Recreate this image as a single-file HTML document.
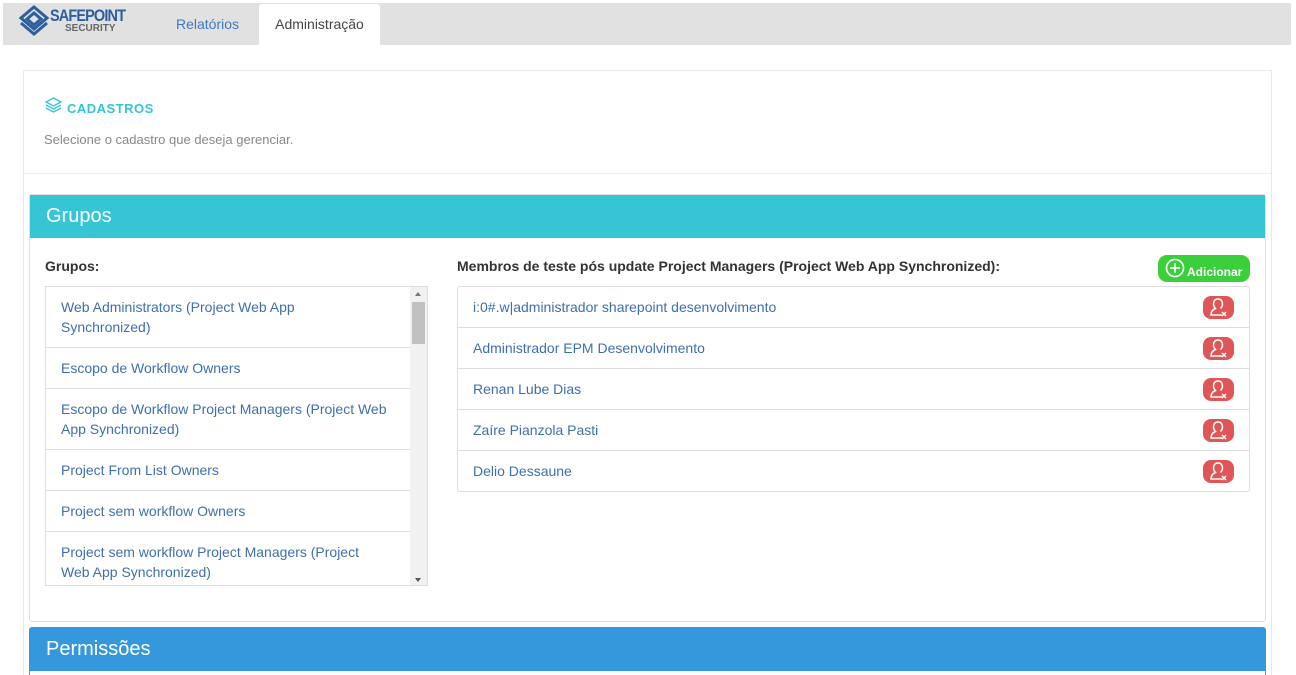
<!DOCTYPE html>
<html><head><meta charset="utf-8"><style>
*{box-sizing:border-box;margin:0;padding:0}
html,body{width:1296px;height:675px;overflow:hidden}
body{background:#fff;font-family:"Liberation Sans",Arial,sans-serif;font-size:14px;color:#333;position:relative}
.top{position:absolute;left:3px;top:3px;width:1288px;height:42px;background:#e1e1e1}
.tab1{position:absolute;left:176px;top:16px;color:#3f7bb8;font-size:14px}
.tab2{position:absolute;left:259px;top:4px;width:121px;height:41px;background:#fff;border-radius:3px 3px 0 0;text-align:center;line-height:41px;color:#444}
.card{position:absolute;left:23px;top:70px;width:1249px;height:620px;border:1px solid #e8e8e8}
.hdr{position:absolute;left:0;top:0;width:100%;height:103px;border-bottom:1px solid #eee}
.pan{position:absolute;left:29px;width:1237px;border:1px solid #ddd;border-radius:3px}
.ph{height:43px;color:#fff;font-size:20px;line-height:43px;padding-left:16px}
.list{position:absolute;border:1px solid #ddd}
.it{border-bottom:1px solid #ddd;color:#3f6fae;padding:10px 15px;line-height:20px;font-size:14px;white-space:nowrap}
.rm{position:absolute;right:15px;top:9px;width:31px;height:23px;background:#e05656;border-radius:8px}
</style></head><body>
<div class="top">
<svg style="position:absolute;left:15px;top:1px" width="32" height="32" viewBox="0 0 32 32"><g fill="none" stroke="#2c5f9e" stroke-width="3"><path d="M16 3L29 14L16 25L3 14Z"/><path d="M16 9L23 15L16 21L9 15Z"/><path d="M3 19L16 30L29 19"/></g></svg>
<div style="position:absolute;left:47px;top:3px;font-weight:bold;color:#2c5f9e;font-size:17px;letter-spacing:-1px;transform:scaleX(.85);transform-origin:left">SAFEPOINT</div>
<div style="position:absolute;left:62px;top:20px;font-weight:bold;color:#666;font-size:10px">SECURITY</div>
</div>
<div class="tab1">Relatórios</div>
<div class="tab2">Administração</div>
<div class="card"><div class="hdr">
<svg style="position:absolute;left:21px;top:26px" width="17" height="16" viewBox="0 0 17 16"><g fill="none" stroke="#35c5d5" stroke-width="1.3"><path d="M8.5 1L16 5L8.5 9L1 5Z"/><path d="M1 8L8.5 12L16 8"/><path d="M1 11L8.5 15L16 11"/></g></svg>
<div style="position:absolute;left:43px;top:30px;color:#35c5d5;font-weight:bold;font-size:13px;letter-spacing:.5px">CADASTROS</div>
<div style="position:absolute;left:20px;top:61px;color:#888;font-size:13px">Selecione o cadastro que deseja gerenciar.</div>
</div></div>
<div class="pan" style="top:194px;height:428px;background:#fff">
<div class="ph" style="background:#35c5d5">Grupos</div>
<div style="position:absolute;left:15px;top:63px;font-weight:bold;font-size:14px">Grupos:</div>
<div style="position:absolute;left:427px;top:63px;font-weight:bold;font-size:14px">Membros de teste pós update Project Managers (Project Web App Synchronized):</div>
<div style="position:absolute;left:1128px;top:60px;width:92px;height:27px;background:#3ccf3c;border-radius:9px;color:#fff;font-weight:bold;font-size:12px">
<svg style="position:absolute;left:7px;top:3px" width="20" height="20" viewBox="0 0 20 20"><circle cx="10" cy="10" r="8.5" fill="none" stroke="#fff" stroke-width="1.6"/><path d="M10 5V15M5 10H15" stroke="#fff" stroke-width="1.6"/></svg>
<span style="position:absolute;left:29px;top:10px">Adicionar</span></div>
<div class="list" style="left:15px;top:91px;width:383px;height:300px;overflow:hidden">
<div style="width:365px">
<div class="it">Web Administrators (Project Web App<br>Synchronized)</div>
<div class="it">Escopo de Workflow Owners</div>
<div class="it">Escopo de Workflow Project Managers (Project Web<br>App Synchronized)</div>
<div class="it">Project From List Owners</div>
<div class="it">Project sem workflow Owners</div>
<div class="it">Project sem workflow Project Managers (Project<br>Web App Synchronized)</div>
</div>
<div style="position:absolute;right:0;top:0;width:17px;height:300px;background:#f1f1f1"><div style="position:absolute;left:2px;top:15px;width:13px;height:42px;background:#c1c1c1"></div>
<div style="position:absolute;left:5px;top:5px;border:3.5px solid transparent;border-bottom:4px solid #777;border-top:0"></div>
<div style="position:absolute;left:5px;bottom:5px;border:3.5px solid transparent;border-top:4px solid #555;border-bottom:0"></div></div>
</div>
<div class="list" style="left:427px;top:91px;width:793px;border-radius:3px">
<div class="it" style="position:relative">i:0#.w|administrador sharepoint desenvolvimento<div class="rm"></div></div>
<div class="it" style="position:relative">Administrador EPM Desenvolvimento<div class="rm"></div></div>
<div class="it" style="position:relative">Renan Lube Dias<div class="rm"></div></div>
<div class="it" style="position:relative">Zaíre Pianzola Pasti<div class="rm"></div></div>
<div class="it" style="position:relative;border-bottom:0">Delio Dessaune<div class="rm"></div></div>
</div>
</div>
<div class="pan" style="top:627px;height:60px;border-color:#3498db"><div class="ph" style="background:#3598dc">Permissões</div></div>
<script>
document.querySelectorAll('.rm').forEach(function(e){e.innerHTML='<svg width="31" height="23" viewBox="0 0 31 23"><g fill="none" stroke="#fff" stroke-width="1.5"><path d="M15 3C12 3 10.5 5 10.5 8C10.5 10 11.5 11.5 12.5 12.5C10 13.5 8 15 8 19H19"/><path d="M15 3C18 3 19.5 5 19.5 8C19.5 10 18.5 11.5 17.5 12.5"/><path d="M19 16L23 20M23 16L19 20"/></g></svg>';});
</script>
</body></html>
